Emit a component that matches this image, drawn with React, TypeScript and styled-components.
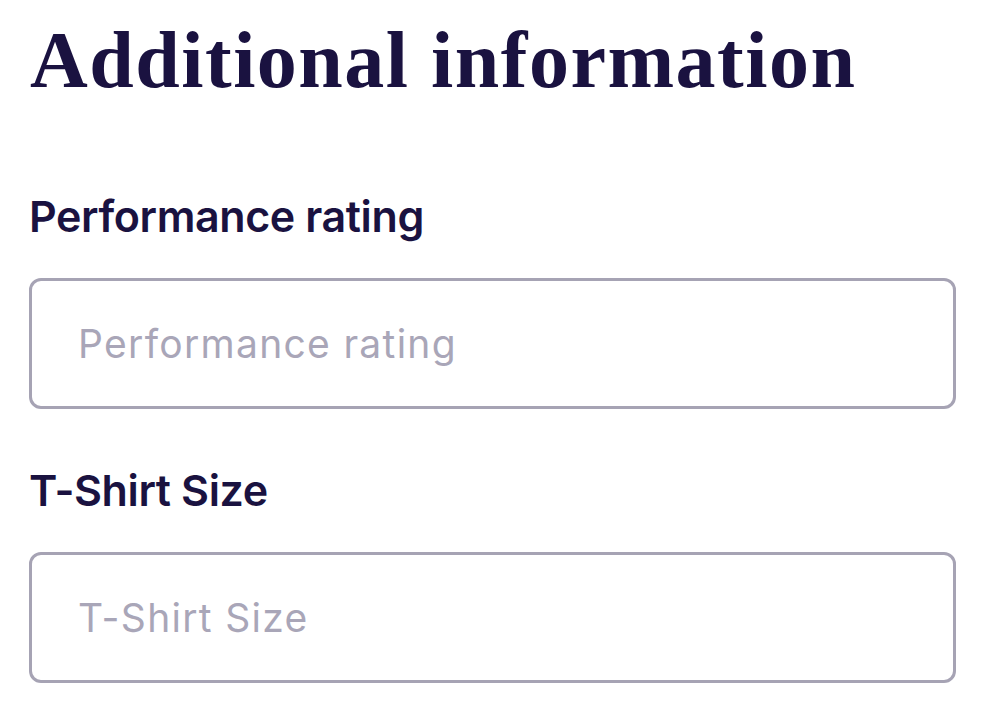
import React from "react";
import styled, { createGlobalStyle } from "styled-components";

const Global = createGlobalStyle`
  html, body { margin: 0; padding: 0; background: #ffffff; }
  * { box-sizing: border-box; }
`;

const Page = styled.div`
  padding: 14px 30px 0 29px;
  width: 986px;
  display: flex;
  flex-direction: column;
`;

const Title = styled.h1`
  margin: 0 0 0 1px;
  font-family: "Liberation Serif", "DejaVu Serif", serif;
  font-weight: 700;
  font-size: 80px;
  line-height: 92px;
  color: #1a1240;
  letter-spacing: 1.5px;
  white-space: nowrap;
`;

const Form = styled.div`
  margin-top: 84px;
  display: flex;
  flex-direction: column;
  gap: 55px;
`;

const Field = styled.label`
  display: flex;
  flex-direction: column;
  gap: 36px;
`;

const Label = styled.span`
  font-family: Inter, "Noto Sans", sans-serif;
  font-weight: 600;
  font-size: 43px;
  line-height: 52px;
  color: #1a1240;
  letter-spacing: -0.4px;
`;

const Input = styled.input`
  width: 927px;
  height: 131px;
  border: 3px solid #a6a3b4;
  border-radius: 12px;
  padding: 0 0 0 46px;
  font-family: Inter, "Noto Sans", sans-serif;
  font-size: 39px;
  letter-spacing: 1.3px;
  color: #1a1240;
  background: #fff;
  outline: none;
  &::placeholder {
    color: #a9a6b8;
  }
`;

const fields = ["Performance rating", "T-Shirt Size"];

export default function App() {
  return (
    <>
      <Global />
      <Page>
        <Title>Additional information</Title>
        <Form>
          {fields.map((f) => (
            <Field key={f}>
              <Label>{f}</Label>
              <Input placeholder={f} />
            </Field>
          ))}
        </Form>
      </Page>
    </>
  );
}
